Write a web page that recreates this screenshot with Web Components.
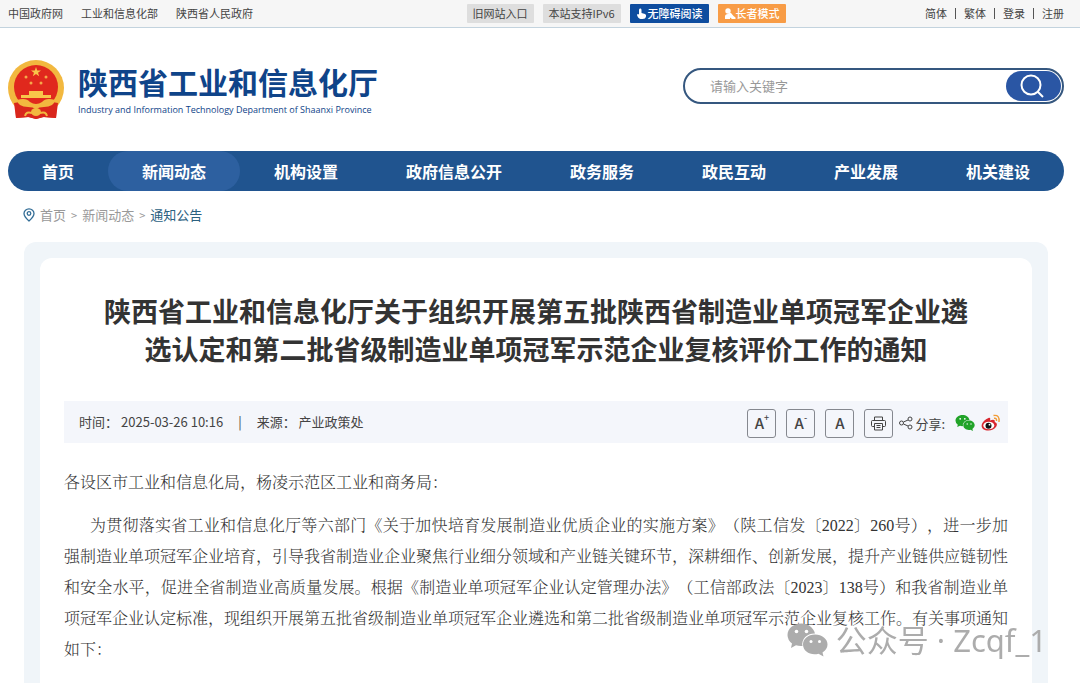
<!DOCTYPE html>
<html lang="zh-CN">
<head>
<meta charset="UTF-8">
<meta name="viewport" content="width=device-width, initial-scale=1.0">
<title>陕西省工业和信息化厅</title>
<style>
    body {
        margin: 0;
        min-height: 100vh;
        display: flex;
        flex-direction: column;
        background-color: #fff;
        color: #444;
        font-family: "Noto Sans CJK SC", "Noto Sans", sans-serif;
        text-spacing-trim: space-all;
    }
    article-card {
        flex: 1;
    }
</style>
</head>
<body>
    <top-bar></top-bar>
    <site-header></site-header>
    <main-nav></main-nav>
    <bread-crumb></bread-crumb>
    <article-card>
        <span slot="title">陕西省工业和信息化厅关于组织开展第五批陕西省制造业单项冠军企业遴选认定和第二批省级制造业单项冠军示范企业复核评价工作的通知</span>
        <article-meta slot="meta"></article-meta>
        <article-text>各设区市工业和信息化局，杨凌示范区工业和商务局：</article-text>
        <article-text indent>为贯彻落实省工业和信息化厅等六部门《关于加快培育发展制造业优质企业的实施方案》（陕工信发〔2022〕260号），进一步加强制造业单项冠军企业培育，引导我省制造业企业聚焦行业细分领域和产业链关键环节，深耕细作、创新发展，提升产业链供应链韧性和安全水平，促进全省制造业高质量发展。根据《制造业单项冠军企业认定管理办法》（工信部政法〔2023〕138号）和我省制造业单项冠军企业认定标准，现组织开展第五批省级制造业单项冠军企业遴选和第二批省级制造业单项冠军示范企业复核工作。有关事项通知如下：</article-text>
    </article-card>
    <water-mark>公众号 · Zcqf_1</water-mark>

<script>
// top-bar
class TopBar extends HTMLElement {
    constructor() {
        super();
        this.attachShadow({ mode: 'open' });
        this.shadowRoot.innerHTML = `
            <style>
                :host {
                    display: grid;
                    grid-template-columns: 1fr 1fr auto;
                    align-items: center;
                    height: 27px;
                    padding: 0 16px 0 8px;
                    background-color: #f6f6f6;
                    border-bottom: 1px solid #c3d3de;
                    font-size: 11px;
                    line-height: 19px;
                    white-space: nowrap;
                }
                a {
                    color: #444;
                    text-decoration: none;
                }
                div {
                    display: flex;
                    align-items: center;
                }
                .links {
                    gap: 18px;
                }
                .tools {
                    gap: 9px;
                }
                .tools a {
                    display: flex;
                    align-items: center;
                    background-color: #dedede;
                    padding: 0 6px;
                    border-radius: 1px;
                }
                .tools a.blue {
                    background-color: #0e4d9f;
                    color: white;
                    font-weight: 500;
                }
                .tools a.orange {
                    background-color: #f89c46;
                    color: white;
                    font-weight: 500;
                }
                .user {
                    gap: 8px;
                }
                .user i {
                    width: 1px;
                    height: 11px;
                    background-color: #555;
                }
            </style>
            <div class="links">
                <a href="#">中国政府网</a>
                <a href="#">工业和信息化部</a>
                <a href="#">陕西省人民政府</a>
            </div>
            <div class="tools">
                <a href="#">旧网站入口</a>
                <a href="#">本站支持IPv6</a>
                <a href="#" class="blue">
                    <svg width="12" height="12" viewBox="0 0 12 12" fill="#fff"><path d="M4 0.500Q5.500 0 5.500 2V5L9 6Q10.500 6.500 10 8.500Q9.500 11 6.500 11H4.500Q2 10.500 1 7Q1.500 5.500 3 6.500V2Q3 0.800 4 0.500Z"/></svg>无障碍阅读</a>
                <a href="#" class="orange">
                    <svg width="12" height="12" viewBox="0 0 12 12" fill="#fff"><circle cx="4" cy="3" r="2.700"/><path d="M1 11V8.500Q1 6 4 6Q5.500 4 7 5L9.500 8L11.500 9.500V11H8L6 9.500V11Z"/></svg>长者模式</a>
            </div>
            <div class="user">
                <a href="#">简体</a><i></i>
                <a href="#">繁体</a><i></i>
                <a href="#">登录</a><i></i>
                <a href="#">注册</a>
            </div>
        `;
    }
}
customElements.define('top-bar', TopBar);

// site-header: emblem, name and search
class SiteHeader extends HTMLElement {
    constructor() {
        super();
        this.attachShadow({ mode: 'open' });
        this.shadowRoot.innerHTML = `
            <style>
                :host {
                    display: flex;
                    justify-content: space-between;
                    align-items: flex-start;
                    height: 91px;
                    padding: 32px 16px 0 8px;
                }
                .logo {
                    display: flex;
                    align-items: flex-start;
                    gap: 14px;
                    color: #0f4489;
                    text-decoration: none;
                }
                h1 {
                    margin: 0;
                    font-size: 30px;
                    line-height: 43px;
                }
                p {
                    margin: 0;
                    font-family: "Open Sans", "Noto Sans", sans-serif;
                    font-size: 9px;
                    line-height: 13px;
                    white-space: nowrap;
                }
                form {
                    display: flex;
                    box-sizing: border-box;
                    width: 381px;
                    height: 36px;
                    margin-top: 8px;
                    padding: 1px;
                    border: 2px solid #35577f;
                    border-radius: 18px;
                }
                input {
                    flex: 1;
                    min-width: 0;
                    padding: 0 24px 2px;
                    border: none;
                    background: none;
                    outline: none;
                    font: inherit;
                    font-size: 13px;
                }
                input::placeholder {
                    color: #999;
                }
                button {
                    display: flex;
                    align-items: center;
                    justify-content: center;
                    width: 55px;
                    padding: 0 4px 0 0;
                    border: none;
                    border-radius: 15px;
                    background-color: #2a56a4;
                }
            </style>
            <a class="logo" href="#">
                <svg width="56" height="60" viewBox="0 0 56 60">
                    <path d="M7 42L49 42L48 58L35 57L28 59L21 57L8 58Z" fill="#d9261c"/>
                    <circle cx="28" cy="28" r="28" fill="#f2b83f"/>
                    <circle cx="28" cy="27" r="22" fill="#e0281d"/>
                    <path d="M28 7L29.200 10.500H33L30 12.700L31.200 16.300L28 14.100L24.800 16.300L26 12.700L23 10.500H26.800Z" fill="#f8c64a"/>
                    <g fill="#f5a94a">
                        <circle cx="18" cy="17" r="1.500"/><circle cx="38" cy="17" r="1.500"/>
                        <circle cx="23" cy="23" r="1.500"/><circle cx="33" cy="23" r="1.500"/>
                    </g>
                    <path d="M21 31H35V35H43V38H13V35H21Z" fill="#f8c64a"/>
                    <path d="M12 42Q20 40 23 44Q28 48 33 44Q36 40 44 42L50 43L48 58L36 57L28 59L20 57L8 58L6 43Z" fill="#d9261c"/>
                    <path d="M9 40Q18 37 22 42Q28 46 34 42Q38 37 47 40Q46 47 36 47Q31 47 28 49Q25 47 20 47Q10 47 9 40Z" fill="#f2b83f"/>
                    <ellipse cx="28" cy="52" rx="5" ry="4" fill="#f2b83f"/>
                    <path d="M17 56Q18 51 24 53M39 56Q38 51 32 53" stroke="#f2b83f" stroke-width="2" fill="none"/>
                </svg>
                <div>
                    <h1>陕西省工业和信息化厅</h1>
                    <p>Industry and Information Technology Department of Shaanxi Province</p>
                </div>
            </a>
            <form>
                <input type="text" placeholder="请输入关键字" aria-label="搜索">
                <button type="button" aria-label="搜索">
                    <svg width="26" height="26" viewBox="0 0 26 26" fill="none" stroke="#fff" stroke-width="2"><circle cx="12" cy="12" r="9.500"/><path d="M18.500 18.500L24 24"/></svg>
                </button>
            </form>
        `;
    }
}
customElements.define('site-header', SiteHeader);

// main-nav
class MainNav extends HTMLElement {
    constructor() {
        super();
        this.attachShadow({ mode: 'open' });
        this.shadowRoot.innerHTML = `
            <style>
                :host {
                    display: block;
                    margin: 0 16px 0 8px;
                }
                nav {
                    display: flex;
                    border-radius: 20px;
                    background-color: #20548f;
                }
                a {
                    flex: 1 1 auto;
                    border-radius: 20px;
                    color: white;
                    font-size: 16px;
                    font-weight: bold;
                    line-height: 40px;
                    text-align: center;
                    text-decoration: none;
                    white-space: nowrap;
                }
                a.active {
                    background-color: #2d60a0;
                }
            </style>
            <nav>
                <a href="#">首页</a>
                <a href="#" class="active">新闻动态</a>
                <a href="#">机构设置</a>
                <a href="#">政府信息公开</a>
                <a href="#">政务服务</a>
                <a href="#">政民互动</a>
                <a href="#">产业发展</a>
                <a href="#">机关建设</a>
            </nav>
        `;
    }
}
customElements.define('main-nav', MainNav);

// bread-crumb
class BreadCrumb extends HTMLElement {
    constructor() {
        super();
        this.attachShadow({ mode: 'open' });
        this.shadowRoot.innerHTML = `
            <style>
                :host {
                    display: flex;
                    align-items: center;
                    gap: 5px;
                    height: 47px;
                    padding: 0 24px 4px 23px;
                    color: #999;
                    font-size: 13px;
                }
                a {
                    color: #999;
                    text-decoration: none;
                }
                a.current {
                    color: #2b617f;
                }
                span {
                    font-size: 11px;
                }
            </style>
            <svg width="12" height="14" viewBox="0 0 12 14" fill="none" stroke="#336d96"><path d="M6 13Q1 8.500 1 5.500A5 4.700 0 0 1 11 5.500Q11 8.500 6 13Z" stroke-width="1.300"/><circle cx="6" cy="5.500" r="1.800" stroke-width="1.300"/></svg>
            <a href="#">首页</a>
            <span>&gt;</span>
            <a href="#">新闻动态</a>
            <span>&gt;</span>
            <a href="#" class="current">通知公告</a>
        `;
    }
}
customElements.define('bread-crumb', BreadCrumb);

// article-card
class ArticleCard extends HTMLElement {
    constructor() {
        super();
        this.attachShadow({ mode: 'open' });
        this.shadowRoot.innerHTML = `
            <style>
                :host {
                    display: flex;
                    margin: 0 32px 0 24px;
                    padding: 16px 16px 0;
                    border-radius: 12px 12px 0 0;
                    background-color: #f0f5f9;
                }
                article {
                    flex: 1;
                    padding: 34px 24px 16px;
                    border-radius: 12px 12px 0 0;
                    background-color: white;
                }
                h2 {
                    margin: 0 32px 33px;
                    color: #333;
                    font-size: 27px;
                    line-height: 38px;
                    text-align: center;
                }
            </style>
            <article>
                <h2><slot name="title"></slot></h2>
                <slot name="meta"></slot>
                <slot></slot>
            </article>
        `;
    }
}
customElements.define('article-card', ArticleCard);

// article-meta
class ArticleMeta extends HTMLElement {
    constructor() {
        super();
        this.attachShadow({ mode: 'open' });
        this.shadowRoot.innerHTML = `
            <style>
                :host {
                    display: flex;
                    justify-content: space-between;
                    align-items: center;
                    height: 42px;
                    margin-bottom: 24px;
                    padding: 0 7px 0 15px;
                    background-color: #f4f6fb;
                    color: #444;
                    font-size: 13px;
                    white-space: nowrap;
                }
                div {
                    display: flex;
                    align-items: center;
                }
                .info {
                    gap: 15px;
                    padding-bottom: 2px;
                }
                .info time {
                    margin-left: 3px;
                }
                .tools {
                    gap: 10px;
                    padding-top: 2px;
                }
                button {
                    display: flex;
                    align-items: center;
                    justify-content: center;
                    box-sizing: border-box;
                    width: 29px;
                    height: 29px;
                    padding: 0;
                    border: 1px solid #85888f;
                    border-radius: 3px;
                    background: none;
                    color: #444;
                    font: inherit;
                    font-size: 15px;
                    font-weight: 500;
                    line-height: 20px;
                }
                sup {
                    align-self: flex-start;
                    font-size: 9px;
                    line-height: 16px;
                }
                .share {
                    gap: 2px;
                    margin-left: -4px;
                }
                .social {
                    gap: 6px;
                }
                .social a {
                    display: flex;
                }
            </style>
            <div class="info">
                <span>时间：<time>2025-03-26 10:16</time></span>
                <span>|</span>
                <span>来源： 产业政策处</span>
            </div>
            <div class="tools">
                <button type="button">A<sup>+</sup></button>
                <button type="button">A<sup>-</sup></button>
                <button type="button">A</button>
                <button type="button" aria-label="打印">
                    <svg width="15" height="15" viewBox="0 0 15 15" fill="none" stroke="#444"><path d="M3.500 4V1H11.500V4M3.500 10.500H1.500Q0.500 10.500 0.500 9.500V5.500Q0.500 4.500 1.500 4.500H13.500Q14.500 4.500 14.500 5.500V9.500Q14.500 10.500 13.500 10.500H11.500M3.500 7.500H11.500V14H3.500ZM5.500 9.500H9.500M5.500 11.500H9.500"/></svg>
                </button>
                <div class="share">
                    <svg width="14" height="14" viewBox="0 0 14 14" fill="none" stroke="#444"><circle cx="2.500" cy="7" r="2"/><circle cx="11" cy="3" r="2"/><circle cx="11" cy="11" r="2"/><path d="M4.500 6L9 4M4.500 8L9 10"/></svg>
                    <span>分享:</span>
                </div>
                <div class="social">
                    <a href="#" aria-label="微信">
                        <svg width="20" height="18" viewBox="0 0 20 18"><path d="M7.500 1C3.500 1 0.500 3.500 0.500 6.700Q0.500 9 2.800 10.700L2.200 13L5 11.800Q6.500 12.300 8 12.100A6 5 0 0 1 14.500 6C14 3 11 1 7.500 1Z" fill="#21a328"/><path d="M14 6.500C10.700 6.500 8.300 8.700 8.300 11.300C8.300 14.500 12 16.700 15.500 15.800L18 17L17.400 15Q19.700 13.500 19.700 11.300C19.700 8.600 17.200 6.500 14 6.500Z" fill="#21a328"/><g fill="#fff"><circle cx="5.200" cy="4.800" r="0.900"/><circle cx="9.800" cy="4.800" r="0.900"/><circle cx="12.200" cy="10" r="0.700"/><circle cx="16" cy="10" r="0.700"/></g></svg>
                    </a>
                    <a href="#" aria-label="微博">
                        <svg width="20" height="18" viewBox="0 0 20 18"><path d="M7.500 4C9.500 3.300 9.500 5 9 6.500C12 5 14.500 5.500 13.700 8C16 8.700 16.500 10.500 15.300 12.500C13.500 15.500 9.500 17 6 16.500C2 16 0 13.500 0.800 10.500C1.500 8 5 4.700 7.500 4Z" fill="#d8262e"/><ellipse cx="7.800" cy="11.500" rx="5.500" ry="3.800" fill="#fff"/><circle cx="7.500" cy="11.700" r="3" fill="#111"/><circle cx="8.500" cy="10.700" r="0.900" fill="#fff"/><path d="M12.500 1.500Q19 0.500 18 8M13 4.300Q16 3.800 15.500 7" fill="none" stroke="#f29b35" stroke-width="1.400"/></svg>
                    </a>
                </div>
            </div>
        `;
    }
}
customElements.define('article-meta', ArticleMeta);

// article-text: one paragraph of the notice
class ArticleText extends HTMLElement {
    constructor() {
        super();
        this.attachShadow({ mode: 'open' });
        this.shadowRoot.innerHTML = `
            <style>
                :host {
                    display: block;
                    margin-bottom: 12px;
                    color: #333;
                    font-family: "Liberation Serif", "Noto Serif CJK SC", "Noto Sans CJK SC", serif;
                    font-size: 16px;
                    font-weight: 300;
                    line-height: 31px;
                    text-align: justify;
                }
                p {
                    margin: 0;
                }
                :host([indent]) p {
                    text-indent: 26px;
                }
            </style>
            <p><slot></slot></p>
        `;
    }
}
customElements.define('article-text', ArticleText);

// water-mark, floats over the bottom right corner
class WaterMark extends HTMLElement {
    constructor() {
        super();
        this.attachShadow({ mode: 'open' });
        this.shadowRoot.innerHTML = `
            <style>
                :host {
                    position: fixed;
                    right: 33px;
                    bottom: 24px;
                    display: flex;
                    align-items: center;
                    gap: 8px;
                    color: #acacac;
                    font-family: "Noto Sans", "Noto Sans CJK SC", sans-serif;
                    font-size: 31px;
                    line-height: 38px;
                    white-space: nowrap;
                    pointer-events: none;
                }
            </style>
            <svg width="41" height="34" viewBox="0 0 41 34"><path d="M14.500 0.500C6.500 0.500 0.500 5.500 0.500 12Q0.500 17 5 20.500L4 25L9 22.300Q12 23.300 15.500 23A12 10.500 0 0 1 28 10.500C26.500 4.500 21 0.500 14.500 0.500Z" fill="#acacac"/><path d="M28 11.500C21 11.500 16 16 16 21.500C16 28.500 24 33 31.500 30.700L36.500 33.500L35.500 29.500Q40.500 26 40.500 21.500C40.500 16 35 11.500 28 11.500Z" fill="#acacac"/><g fill="#fff"><circle cx="9.500" cy="8.500" r="1.800"/><circle cx="19.500" cy="8.500" r="1.800"/><circle cx="24" cy="18.500" r="1.500"/><circle cx="32.500" cy="18.500" r="1.500"/></g></svg>
            <slot></slot>
        `;
    }
}
customElements.define('water-mark', WaterMark);
</script>
</body>
</html>
